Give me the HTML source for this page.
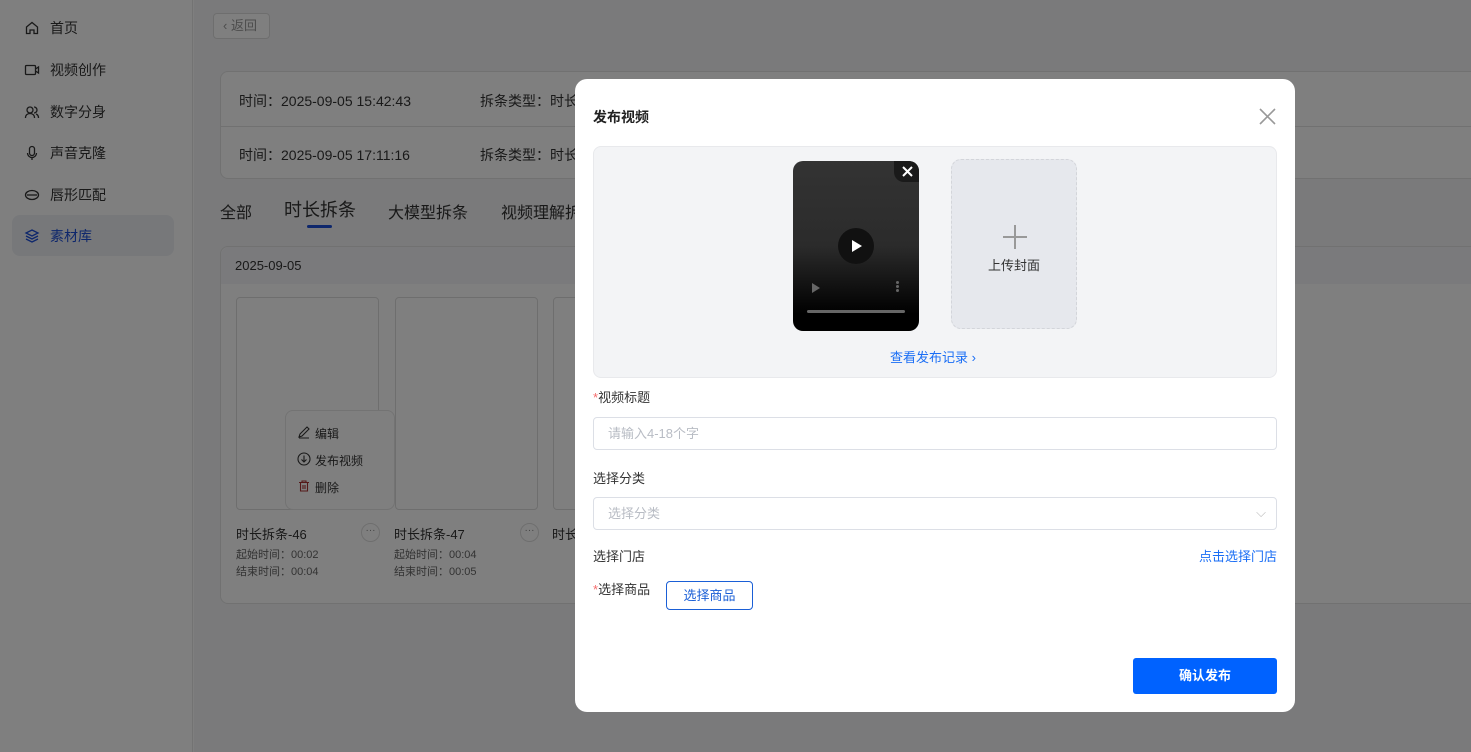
<!DOCTYPE html>
<html><head><meta charset="utf-8"><style>
*{box-sizing:border-box;margin:0;padding:0}
body{width:1471px;height:752px;overflow:hidden;position:relative;background:#fff;font-family:"Liberation Sans","Noto Sans CJK SC",sans-serif;color:#333;font-size:14px}
.abs{position:absolute}
.side{left:0;top:0;width:193px;height:752px;background:#fff;border-right:1px solid #e6e6e6}
.nav{position:absolute;left:24px;font-size:14px;color:#333;display:flex;align-items:center;gap:10px}
.nav svg{width:16px;height:16px}
.main{left:194px;top:0;width:1277px;height:752px;background:#f4f5f7}
.card{background:#fff;border:1px solid #e3e3e3;border-radius:8px}
.ov{left:0;top:0;width:1471px;height:752px;background:rgba(0,0,0,.5)}
.modal{left:575px;top:79px;width:720px;height:633px;background:#fff;border-radius:12px}
.lbl{position:absolute;left:18px;font-size:13px;color:#333}
.inp{position:absolute;left:18px;width:684px;height:33px;border:1px solid #dcdfe6;border-radius:4px;color:#b8bcc4;font-size:13px;padding-left:14px;line-height:31px}
</style></head><body>
<div class="abs side">
 <div class="nav" style="top:18px"><svg viewBox="0 0 16 16" fill="none" stroke="#333" stroke-width="1.3"><path d="M2.5 7 8 2.5 13.5 7v6.5h-3.5V10H6v3.5H2.5z"/></svg>首页</div>
 <div class="nav" style="top:60px"><svg viewBox="0 0 16 16" fill="none" stroke="#333" stroke-width="1.3"><rect x="1.5" y="3.5" width="10" height="9" rx="1"/><path d="M11.5 7l3-2v6l-3-2"/></svg>视频创作</div>
 <div class="nav" style="top:102px"><svg viewBox="0 0 16 16" fill="none" stroke="#333" stroke-width="1.3"><circle cx="6" cy="6" r="3"/><path d="M1.5 14c0-3 2-4.5 4.5-4.5s4.5 1.5 4.5 4.5M10 3a3 3 0 010 6M12 10c1.5.5 2.5 2 2.5 4"/></svg>数字分身</div>
 <div class="nav" style="top:143px"><svg viewBox="0 0 16 16" fill="none" stroke="#333" stroke-width="1.3"><rect x="5.5" y="1.5" width="5" height="9" rx="2.5"/><path d="M3.5 8a4.5 4.5 0 009 0M8 12.5v2.5"/></svg>声音克隆</div>
 <div class="nav" style="top:185px"><svg viewBox="0 0 16 16" fill="none" stroke="#333" stroke-width="1.3"><ellipse cx="8" cy="8" rx="6.5" ry="4.5"/><path d="M3 8h10"/></svg>唇形匹配</div>
 <div class="abs" style="left:12px;top:215px;width:162px;height:41px;background:#eef0f5;border-radius:8px"></div>
 <div class="nav" style="top:226px;color:#1d4fd8"><svg viewBox="0 0 16 16" fill="none" stroke="#1d4fd8" stroke-width="1.3"><path d="M8 2 14 5 8 8 2 5z M2 8l6 3 6-3M2 11l6 3 6-3"/></svg>素材库</div>
</div>
<div class="abs main">
 <div class="abs" style="left:19px;top:13px;width:57px;height:26px;border:1px solid #ddd;border-radius:4px;background:#fff;font-size:13px;color:#999;line-height:24px;padding-left:9px">‹ 返回</div>
 <div class="abs card" style="left:26px;top:71px;width:1260px;height:108px">
  <div class="abs" style="left:18px;top:19px;font-size:14px">时间：2025-09-05 15:42:43</div>
  <div class="abs" style="left:259px;top:19px;font-size:14px">拆条类型：时长</div>
  <div class="abs" style="left:0;top:54px;width:100%;border-top:1px solid #e3e3e3"></div>
  <div class="abs" style="left:18px;top:73px;font-size:14px">时间：2025-09-05 17:11:16</div>
  <div class="abs" style="left:259px;top:73px;font-size:14px">拆条类型：时长</div>
 </div>
 <div class="abs" style="left:26px;top:199px;font-size:16px">全部</div>
 <div class="abs" style="left:90px;top:196px;font-size:18px">时长拆条</div>
 <div class="abs" style="left:113px;top:225px;width:25px;height:3px;background:#1d4fd8;border-radius:2px"></div>
 <div class="abs" style="left:194px;top:199px;font-size:16px">大模型拆条</div>
 <div class="abs" style="left:307px;top:199px;font-size:16px">视频理解拆条</div>
 <div class="abs card" style="left:26px;top:246px;width:1260px;height:358px">
  <div class="abs" style="left:0;top:0;width:100%;height:37px;background:#f4f5f8;border-radius:8px 8px 0 0"></div>
  <div class="abs" style="left:14px;top:11px;font-size:13px">2025-09-05</div>
  <div class="abs" style="left:15px;top:50px;width:143px;height:213px;border:1px solid #ddd;border-radius:4px"></div>
  <div class="abs" style="left:174px;top:50px;width:143px;height:213px;border:1px solid #ddd;border-radius:4px"></div>
  <div class="abs" style="left:332px;top:50px;width:143px;height:213px;border:1px solid #ddd;border-radius:4px"></div>
  <div class="abs" style="left:15px;top:277px;font-size:13px">时长拆条-46</div>
  <div class="abs" style="left:15px;top:299px;font-size:11px;color:#666">起始时间：00:02</div>
  <div class="abs" style="left:15px;top:316px;font-size:11px;color:#666">结束时间：00:04</div>
  <div class="abs" style="left:140px;top:276px;width:19px;height:19px;border:1px solid #ddd;border-radius:50%;font-size:10px;text-align:center;line-height:14px;color:#888">···</div>
  <div class="abs" style="left:173px;top:277px;font-size:13px">时长拆条-47</div>
  <div class="abs" style="left:173px;top:299px;font-size:11px;color:#666">起始时间：00:04</div>
  <div class="abs" style="left:173px;top:316px;font-size:11px;color:#666">结束时间：00:05</div>
  <div class="abs" style="left:299px;top:276px;width:19px;height:19px;border:1px solid #ddd;border-radius:50%;font-size:10px;text-align:center;line-height:14px;color:#888">···</div>
  <div class="abs" style="left:331px;top:277px;font-size:13px">时长</div>
  <div class="abs" style="left:64px;top:163px;width:110px;height:100px;background:#fff;border:1px solid #e6e6e6;border-radius:8px;font-size:12px">
   <div class="abs" style="left:29px;top:14px">编辑</div>
   <div class="abs" style="left:29px;top:41px">发布视频</div>
   <div class="abs" style="left:29px;top:68px">删除</div>
   <svg class="abs" style="left:11px;top:14px" width="14" height="14" viewBox="0 0 14 14" fill="none" stroke="#333" stroke-width="1.1"><path d="M2 12l1-3 7-7 2 2-7 7zM2 13h10"/></svg>
   <svg class="abs" style="left:11px;top:41px" width="14" height="14" viewBox="0 0 14 14" fill="none" stroke="#333" stroke-width="1.1"><circle cx="7" cy="7" r="6"/><path d="M7 3.5v6M4.5 7.5 7 10l2.5-2.5"/></svg>
   <svg class="abs" style="left:12px;top:69px" width="12" height="12" viewBox="0 0 12 12" fill="none" stroke="#a33" stroke-width="1.1"><path d="M1 2.5h10M4 2.5V1h4v1.5M2.5 2.5v8.5h7V2.5M5 5v4M7 5v4"/></svg>
  </div>
 </div>
</div>
<div class="abs ov"></div>
<div class="abs modal">
 <div class="abs" style="left:18px;top:28px;font-size:14px;font-weight:bold;color:#222">发布视频</div>
 <svg class="abs" style="left:684px;top:29px" width="17" height="17" viewBox="0 0 17 17" stroke="#999" stroke-width="1.6"><path d="M1 1l15 15M16 1 1 16"/></svg>
 <div class="abs" style="left:18px;top:67px;width:684px;height:232px;background:#f3f4f6;border:1px solid #e8e9ec;border-radius:8px"></div>
 <div class="abs" style="left:218px;top:82px;width:126px;height:170px;border-radius:10px;background:linear-gradient(#333 0%,#2b2b2b 50%,#000 90%);overflow:hidden">
  <div class="abs" style="right:0;top:0;width:25px;height:21px;background:#1a1a1a;border-radius:0 0 0 10px"></div>
  <svg class="abs" style="right:6px;top:5px" width="11" height="11" viewBox="0 0 11 11" stroke="#fff" stroke-width="2"><path d="M1 1l9 9M10 1 1 10"/></svg>
  <div class="abs" style="left:45px;top:67px;width:36px;height:36px;border-radius:50%;background:#111"></div>
  <div class="abs" style="left:59px;top:79px;width:0;height:0;border-left:10px solid #fff;border-top:6px solid transparent;border-bottom:6px solid transparent"></div>
  <div class="abs" style="left:19px;top:122px;width:0;height:0;border-left:8px solid #666;border-top:5px solid transparent;border-bottom:5px solid transparent"></div>
  <div class="abs" style="left:103px;top:120px;width:3px;height:3px;border-radius:50%;background:#666;box-shadow:0 4px 0 #666,0 8px 0 #666"></div>
  <div class="abs" style="left:14px;top:149px;width:98px;height:3px;background:#666;border-radius:2px"></div>
 </div>
 <div class="abs" style="left:376px;top:80px;width:126px;height:170px;border:1px dashed #d3d5da;border-radius:10px;background:#e6e8ed">
  <div class="abs" style="left:51px;top:76px;width:24px;height:2px;background:#999"></div>
  <div class="abs" style="left:62px;top:65px;width:2px;height:24px;background:#999"></div>
  <div class="abs" style="left:0;top:95px;width:100%;text-align:center;font-size:13px;color:#333">上传封面</div>
 </div>
 <div class="abs" style="left:315px;top:268px;font-size:13px;color:#1a6ef5">查看发布记录 ›</div>
 <div class="lbl" style="top:308px"><span style="color:#f56c6c">*</span>视频标题</div>
 <div class="inp" style="top:338px">请输入4-18个字</div>
 <div class="lbl" style="top:389px">选择分类</div>
 <div class="inp" style="top:418px">选择分类<span style="position:absolute;right:10px;top:-1px;color:#bbb">⌵</span></div>
 <div class="lbl" style="top:467px">选择门店</div>
 <div class="abs" style="right:18px;top:467px;font-size:13px;color:#1a6ef5">点击选择门店</div>
 <div class="lbl" style="top:500px"><span style="color:#f56c6c">*</span>选择商品</div>
 <div class="abs" style="left:91px;top:502px;width:87px;height:29px;border:1px solid #1a5fd6;border-radius:4px;color:#1a5fd6;font-size:13px;text-align:center;line-height:27px">选择商品</div>
 <div class="abs" style="left:558px;top:579px;width:144px;height:36px;background:#0062ff;border-radius:3px;color:#fff;font-size:13px;font-weight:bold;text-align:center;line-height:36px">确认发布</div>
</div>
</body></html>
